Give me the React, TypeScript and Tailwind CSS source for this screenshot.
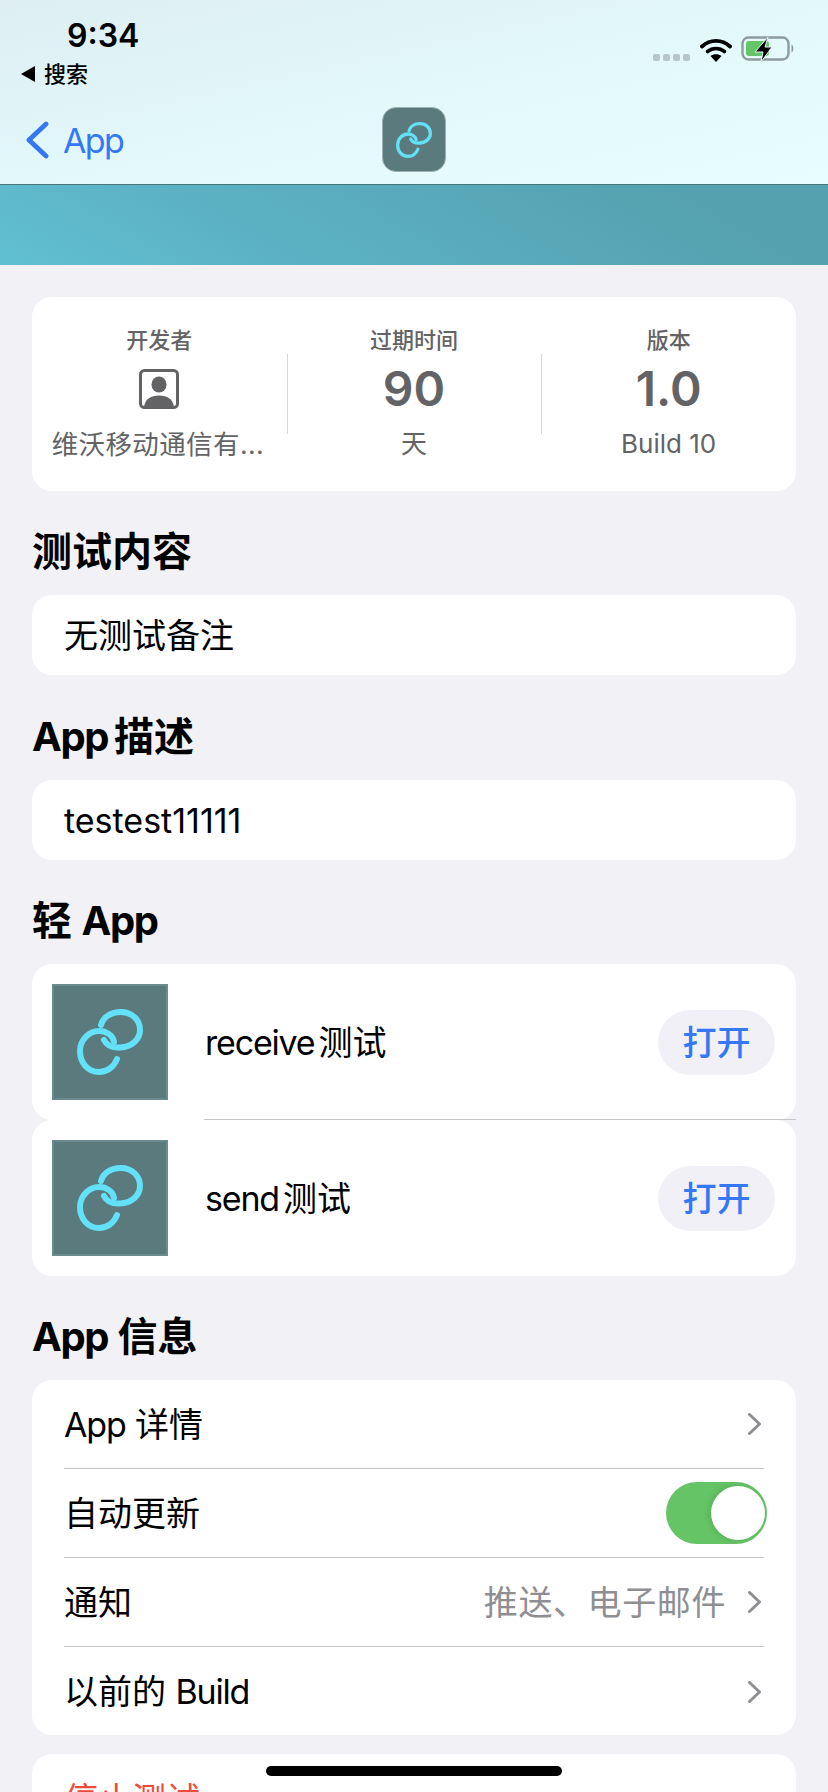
const font = { fontFamily: '"Inter", "Noto Sans CJK SC", sans-serif' }

function LinkRings({ className }: { className?: string }) {
    return (
        <svg viewBox="0 0 66 66" fill="none" className={className}>
            <path d="M27 31C30 37 36 39 43 38.500C55 38 63 30 63 21C63 10 54 3 44 3C34 3 26 8 24 16" stroke="#62e1f8" strokeWidth="6" strokeLinecap="round" />
            <path d="M40 50C37 58 30 63 22 63C11 63 3 54 3 42C3 31 12 22 22 22C29 22 36 26 37 33" stroke="#62e1f8" strokeWidth="6" strokeLinecap="round" />
        </svg>
    )
}

function Chevron() {
    return (
        <svg viewBox="0 0 13 22" fill="none" className="w-[13px] h-[22px] mr-[3px] shrink-0">
            <path d="M1.500 1.500L11.500 11L1.500 20.500" stroke="#8e8e93" strokeWidth="3" strokeLinecap="round" strokeLinejoin="round" />
        </svg>
    )
}

// SF's latin is narrower than Inter's, so latin runs get squeezed a bit
function Lt({ children }: { children: React.ReactNode }) {
    return <span className="tracking-[-0.035em]">{children}</span>
}

function SectionTitle({ children }: { children: React.ReactNode }) {
    return <h2 className="px-[32px] pt-[3px] h-[52px] flex items-center text-[40px] font-bold text-black whitespace-pre">{children}</h2>
}

function StatusIcons() {
    return (
        <div className="flex items-end gap-[10px]">
            <div className="flex gap-[3px] mb-[1px]">
                <span className="w-[7px] h-[7px] rounded-[2px] bg-[#b8c6cb]" />
                <span className="w-[7px] h-[7px] rounded-[2px] bg-[#b8c6cb]" />
                <span className="w-[7px] h-[7px] rounded-[2px] bg-[#b8c6cb]" />
                <span className="w-[7px] h-[7px] rounded-[2px] bg-[#b8c6cb]" />
            </div>
            <svg viewBox="0 0 32 24" fill="none" className="w-[32px] h-[24px]">
                <path d="M2 8.500C10 1 22 1 30 8.500" stroke="#000" strokeWidth="3.800" strokeLinecap="round" />
                <path d="M7.500 13.500C12.500 9.500 19.500 9.500 24.500 13.500" stroke="#000" strokeWidth="3.600" strokeLinecap="round" />
                <path d="M16 24L10.500 18C13.500 15.500 18.500 15.500 21.500 18Z" fill="#000" />
            </svg>
            <svg viewBox="0 0 56 30" fill="none" className="w-[56px] h-[30px] -ml-[1px] -mb-[2px]">
                <rect x="1.500" y="3.500" width="46" height="22" rx="6" stroke="#8f9a9d" strokeWidth="2.400" />
                <rect x="5" y="7" width="23" height="15" rx="3" fill="#65c466" />
                <path d="M50.500 10.500C53 11.500 53 17.500 50.500 18.500Z" fill="#8f9a9d" />
                <path d="M27 3L14 18H22L20 28L31 13H24Z" fill="#000" stroke="#e4fafd" strokeWidth="1" />
            </svg>
        </div>
    )
}

function MiniApp({ name, divider }: { name: string; divider?: boolean }) {
    return (
        <div className="relative h-[156px] bg-white rounded-[20px] flex items-center pl-[20px] pr-[21px]">
            <div className="w-[116px] h-[116px] bg-[#5a7a7e] border-[2px] border-[#6a8c90] flex items-center justify-center shrink-0">
                <LinkRings className="w-[66px] h-[66px]" />
            </div>
            <span className="ml-[37px] flex-1 text-[34px] text-black whitespace-pre">
                <Lt>{name}</Lt>
                <span className="ml-[4px]">测试</span>
            </span>
            <button className="w-[117px] h-[65px] rounded-full bg-[#f0f0f6] text-[#3478f6] text-[34px] font-medium flex items-center justify-center">
                打开
            </button>
            {divider && <div className="absolute left-[172px] right-0 bottom-0 h-[1px] bg-[#c6c6c8]" />}
        </div>
    )
}

function InfoRow({ label, value, last, right }: { label: React.ReactNode; value?: string; last?: boolean; right?: React.ReactNode }) {
    return (
        <div className={`h-[89px] mx-[32px] flex items-center ${last ? "" : "border-b border-[#c6c6c8]"}`}>
            <span className="flex-1 text-[34px] text-black whitespace-pre">{label}</span>
            {value && <span className="text-[34px] tracking-[0.6px] text-[#8e8e93] mr-[22px]">{value}</span>}
            {right ?? <Chevron />}
        </div>
    )
}

export default function App() {
    return (
        <div className="relative w-[828px] h-[1792px] overflow-hidden bg-[#f1f1f6]" style={font}>
            <header className="h-[185px] bg-gradient-to-br from-[#deeef1] via-[#e2f8fb] to-[#e8fdff] border-b border-[#46757c]">
                <div className="h-[100px] flex justify-between pl-[21px] pr-[31px]">
                    <div className="flex flex-col">
                        <span className="mt-[15px] ml-[46px] text-[32px] leading-[42px] font-semibold text-black">9:34</span>
                        <div className="flex items-center mt-[1px]">
                            <span className="w-0 h-0 border-y-[8px] border-y-transparent border-r-[14px] border-r-black" />
                            <span className="ml-[9px] text-[22px] leading-[32px] font-medium text-black">搜索</span>
                        </div>
                    </div>
                    <div className="mt-[34px] h-[30px]">
                        <StatusIcons />
                    </div>
                </div>
                <div className="relative h-[84px] flex items-center pl-[25px]">
                    <svg viewBox="0 0 24 38" fill="none" className="w-[24px] h-[38px] -mt-[4px]">
                        <path d="M21 3L4 19L21 35" stroke="#3478f6" strokeWidth="4.800" strokeLinecap="round" strokeLinejoin="round" />
                    </svg>
                    <span className="ml-[14px] text-[34px] tracking-[-0.05em] text-[#3478f6] -mt-[4px]">App</span>
                    <div className="absolute left-[382px] top-[7px] w-[64px] h-[65px] rounded-[14px] bg-[#5a7a7e] border border-[#9fb0b2] flex items-center justify-center">
                        <LinkRings className="w-[36px] h-[36px]" />
                    </div>
                </div>
            </header>

            <div className="h-[80px] bg-[linear-gradient(30deg,#60c0d2_0%,#5cb2c4_30%,#55a1af_85%)]" />

            <main className="pt-[32px]">
                <section className="mx-[32px] h-[194px] bg-white rounded-[20px] grid grid-cols-3 pt-[27px] text-[#636366]">
                    <div className="flex flex-col items-center min-w-0">
                        <span className="text-[22px] leading-[32px] font-medium">开发者</span>
                        <svg viewBox="0 0 40 40" className="w-[40px] h-[40px] mt-[13px]">
                            <rect x="1.500" y="1.500" width="37" height="37" rx="4" fill="none" stroke="#636366" strokeWidth="3" />
                            <ellipse cx="20" cy="15.500" rx="7.500" ry="8" fill="#636366" />
                            <path d="M5 38C6 30 12 26.500 20 26.500C28 26.500 34 30 35 38Z" fill="#636366" />
                        </svg>
                        <span className="mt-[17px] mr-[3px] whitespace-nowrap text-[26.500px] tracking-[0.4px] leading-[36px]">维沃移动通信有...</span>
                    </div>
                    <div className="flex flex-col items-center relative">
                        <span className="absolute left-0 top-[30px] w-[1px] h-[80px] bg-[#d8d8da]" />
                        <span className="text-[22px] leading-[32px] font-medium">过期时间</span>
                        <span className="text-[48px] leading-[58px] font-semibold mt-[4px]">90</span>
                        <span className="text-[26px] leading-[36px] mt-[8px]">天</span>
                    </div>
                    <div className="flex flex-col items-center relative">
                        <span className="absolute left-0 top-[30px] w-[1px] h-[80px] bg-[#d8d8da]" />
                        <span className="text-[22px] leading-[32px] font-medium">版本</span>
                        <span className="text-[48px] leading-[58px] font-semibold mt-[4px]">1.0</span>
                        <span className="text-[26px] leading-[36px] mt-[8px]">Build 10</span>
                    </div>
                </section>

                <div className="mt-[33px]"><SectionTitle>测试内容</SectionTitle></div>
                <section className="mx-[32px] mt-[19px] h-[80px] bg-white rounded-[20px] flex items-center px-[32px] text-[34px] text-black">无测试备注</section>

                <div className="mt-[34px]"><SectionTitle><Lt>App</Lt><span className="ml-[6px]">描述</span></SectionTitle></div>
                <section className="mx-[32px] mt-[19px] h-[80px] bg-white rounded-[20px] flex items-center px-[32px] text-[34px] text-black">testest11111</section>

                <div className="mt-[33px]"><SectionTitle>轻 <Lt>App</Lt></SectionTitle></div>
                <section className="mx-[32px] mt-[19px]">
                    <MiniApp name="receive" divider />
                    <MiniApp name="send" />
                </section>

                <div className="mt-[33px]"><SectionTitle><Lt>App</Lt> 信息</SectionTitle></div>
                <section className="mx-[32px] mt-[19px] h-[355px] bg-white rounded-[20px]">
                    <InfoRow label={<><Lt>App</Lt> 详情</>} />
                    <InfoRow
                        label="自动更新"
                        right={
                            <div className="relative w-[101px] h-[62px] -mr-[3px] rounded-full bg-[#65c466]">
                                <span className="absolute right-[2px] top-[4px] w-[54px] h-[54px] rounded-full bg-white shadow-[-2px_0_6px_rgba(0,0,0,0.12)]" />
                            </div>
                        }
                    />
                    <InfoRow label="通知" value="推送、电子邮件" />
                    <InfoRow label={<>以前的 <Lt>Build</Lt></>} last />
                </section>

                <section className="mx-[32px] mt-[19px] h-[89px] bg-white rounded-[20px] px-[32px] pt-[20px] text-[34px] text-[#eb4d3d]">停止测试</section>
            </main>

            <div className="absolute left-[266px] top-[1766px] w-[296px] h-[10px] rounded-full bg-black" />
        </div>
    )
}
